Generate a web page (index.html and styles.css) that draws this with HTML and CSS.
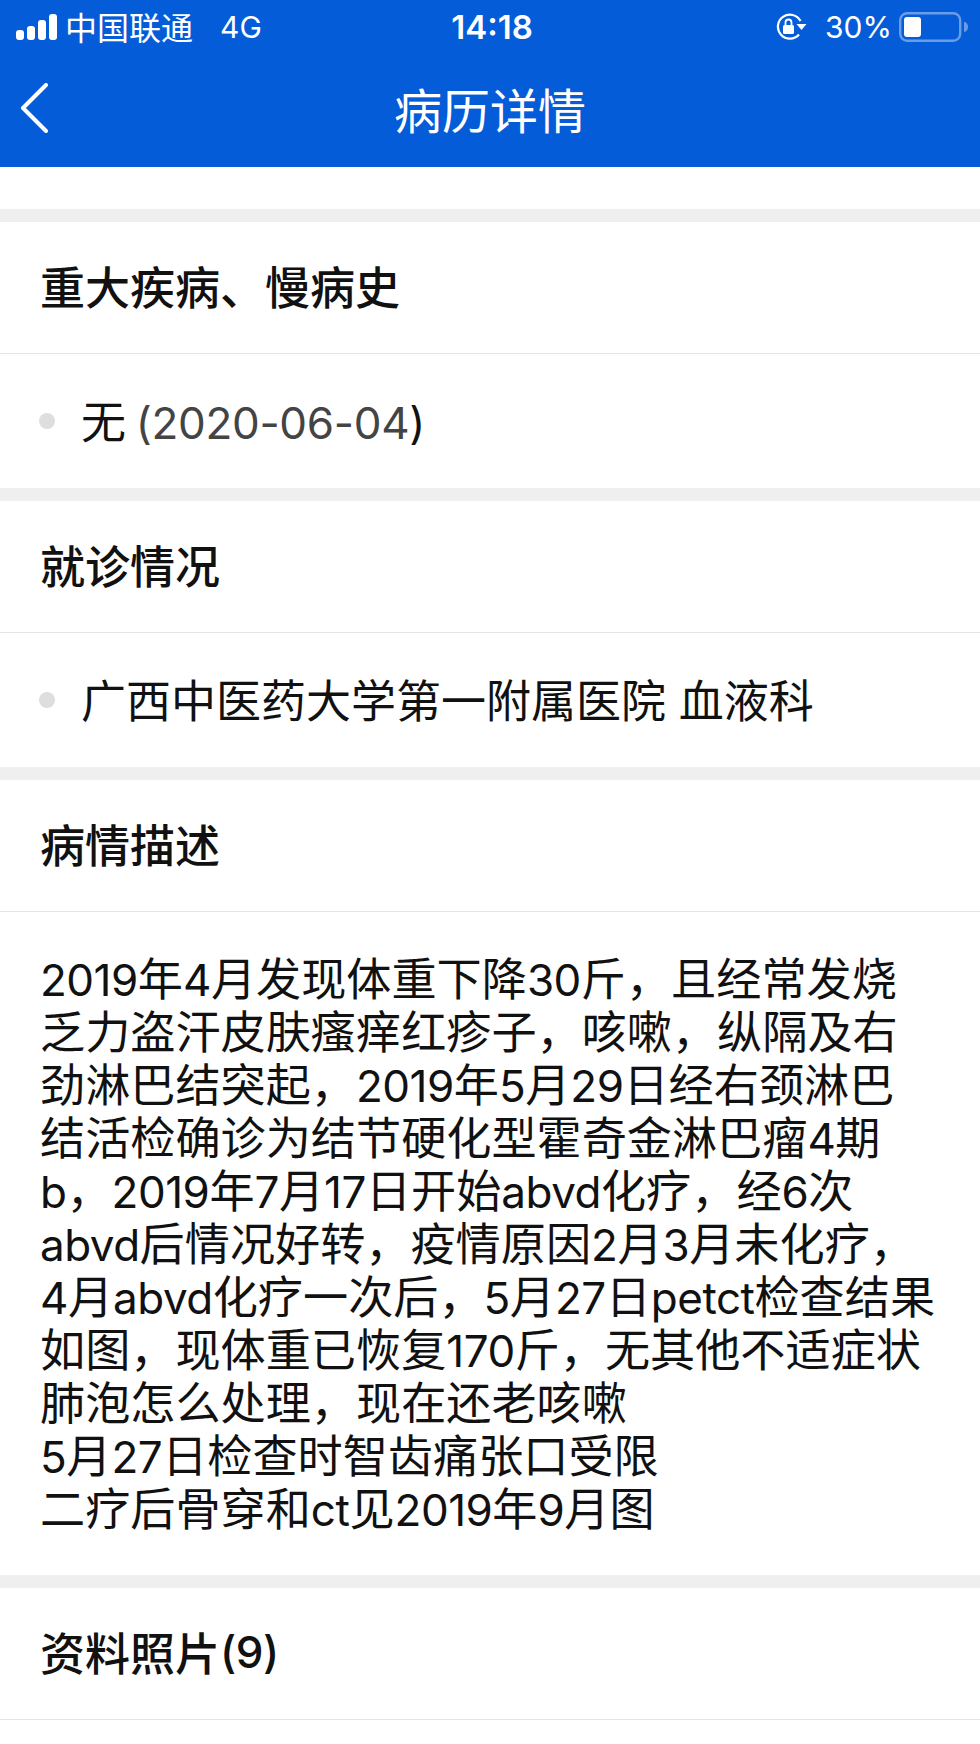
FILE: index.html
```html
<!DOCTYPE html>
<html lang="zh-CN">
<head>
<meta charset="UTF-8">
<title>病历详情</title>
<link rel="stylesheet" href="styles.css">
</head>
<body>

<header class="top">
    <div class="status">
        <div class="status-left">
            <svg class="signal" width="41" height="26" viewBox="0 0 41 26">
                <rect x="0" y="16" width="8" height="10" rx="3" fill="#fff"/>
                <rect x="11" y="12" width="8" height="14" rx="3" fill="#fff"/>
                <rect x="22" y="6" width="8" height="20" rx="3" fill="#fff"/>
                <rect x="33" y="0" width="8" height="26" rx="3" fill="#fff"/>
            </svg>
            <span class="carrier">中国联通</span>
            <span class="net">4G</span>
        </div>
        <div class="clock">14:18</div>
        <div class="status-right">
            <svg class="lock" width="32" height="28" viewBox="0 0 32 28">
                <path d="M24 21.5 A12 12 0 1 1 25.5 8" fill="none" stroke="#fff" stroke-width="2.2"/>
                <path d="M21.5 11 L31.5 11 L26.5 17 Z" fill="#fff"/>
                <rect x="8" y="12" width="11" height="9" rx="1.5" fill="#fff"/>
                <path d="M10.5 12 V9.5 a3 3 0 0 1 6 0 V12" fill="none" stroke="#fff" stroke-width="1.8"/>
            </svg>
            <span class="percent">30%</span>
            <svg class="battery" width="69" height="30" viewBox="0 0 69 30">
                <rect x="1.2" y="1.2" width="60" height="27.6" rx="7" fill="none" stroke="#fff" stroke-opacity=".4" stroke-width="2.4"/>
                <rect x="5" y="5" width="17" height="20" rx="3" fill="#fff"/>
                <path d="M65 10 a4 5 0 0 1 0 10 Z" fill="#fff" fill-opacity=".4"/>
            </svg>
        </div>
    </div>
    <nav class="nav">
        <svg class="back" width="30" height="50" viewBox="0 0 30 50">
            <path d="M26 2 L3 25 L26 48" fill="none" stroke="#fff" stroke-width="4" stroke-linecap="round" stroke-linejoin="round"/>
        </svg>
        <h1 class="nav-title">病历详情</h1>
    </nav>
</header>

<div class="spacer"></div>

<section class="card">
    <h2 class="card-title">重大疾病、慢病史</h2>
    <div class="item"><span class="dot"></span><span class="tight">无 <span class="lat date">(2020-06-04</span><span class="lat">)</span></span></div>
</section>

<section class="card">
    <h2 class="card-title">就诊情况</h2>
    <div class="item"><span class="dot"></span><span>广西中医药大学第一附属医院 血液科</span></div>
</section>

<section class="card">
    <h2 class="card-title">病情描述</h2>
    <p class="desc"><span class="lat">2019</span>年<span class="lat">4</span>月发现体重下降<span class="lat">30</span>斤，且经常发烧<br>乏力盗汗皮肤瘙痒红疹子，咳嗽，纵隔及右<br>劲淋巴结突起，<span class="lat">2019</span>年<span class="lat">5</span>月<span class="lat">29</span>日经右颈淋巴<br>结活检确诊为结节硬化型霍奇金淋巴瘤<span class="lat">4</span>期<br><span class="lat">b</span>，<span class="lat">2019</span>年<span class="lat">7</span>月<span class="lat">17</span>日开始<span class="lat">abvd</span>化疗，经<span class="lat">6</span>次<br><span class="lat">abvd</span>后情况好转，疫情原因<span class="lat">2</span>月<span class="lat">3</span>月未化疗，<br><span class="lat">4</span>月<span class="lat">abvd</span>化疗一次后，<span class="lat">5</span>月<span class="lat">27</span>日<span class="lat">petct</span>检查结果<br>如图，现体重已恢复<span class="lat">170</span>斤，无其他不适症状<br>肺泡怎么处理，现在还老咳嗽<br><span class="lat">5</span>月<span class="lat">27</span>日检查时智齿痛张口受限<br>二疗后骨穿和<span class="lat">ct</span>见<span class="lat">2019</span>年<span class="lat">9</span>月图</p>
</section>

<section class="card">
    <h2 class="card-title">资料照片<span class="lat">(9)</span></h2>
</section>

</body>
</html>
```

FILE: styles.css
```css
* {
    box-sizing: border-box;
}
html, body {
    margin: 0;
    padding: 0;
}
body {
    background-color: #fff;
    color: #111;
    font-family: Inter, "Noto Sans CJK SC", sans-serif;
    overflow: hidden;
}

.top {
    background-color: #055cd8;
    color: #fff;
    height: 167px;
}
.status {
    height: 54px;
    padding: 0 12px 0 16px;
    display: grid;
    grid-template-columns: 1fr auto 1fr;
    align-items: center;
}
.status-left, .status-right {
    display: flex;
    align-items: center;
}
.status-right {
    justify-content: flex-end;
}
.signal {
    margin-right: 8px;
}
.carrier {
    font-size: 32px;
    margin-bottom: 3px;
}
.net {
    font-size: 30px;
    margin-left: 27px;
}
.clock {
    font-size: 33px;
    font-weight: 600;
}
.percent {
    font-size: 30px;
    margin: 0 7px 0 18px;
}

.nav {
    height: 113px;
    padding: 0 20px 6px;
    display: flex;
    align-items: center;
    position: relative;
}
.nav-title {
    position: absolute;
    left: 0;
    right: 0;
    margin: 0;
    text-align: center;
    font-size: 48px;
    font-weight: 400;
}

.spacer {
    height: 42px;
}
.card {
    border-top: 13px solid #efefef;
}
.card-title {
    margin: 0;
    height: 132px;
    padding: 0 40px 4px;
    display: flex;
    align-items: center;
    font-size: 45px;
    font-weight: 500;
    border-bottom: 1px solid #e4e4e4;
}
.item {
    height: 134px;
    padding: 0 39px 4px;
    display: flex;
    align-items: center;
    gap: 26px;
    font-size: 45px;
}
.dot {
    width: 16px;
    height: 16px;
    margin-top: 4px;
    border-radius: 50%;
    background-color: #dedede;
}
.tight {
    word-spacing: -3px;
}
.lat {
    font-size: 44px;
    letter-spacing: -.5px;
    line-height: 1;
}
.date {
    color: #444;
    letter-spacing: -.3px;
}
.desc {
    margin: 0;
    height: 663px;
    padding: 41px 40px 0;
    font-size: 45.15px;
    line-height: 53px;
    white-space: nowrap;
}
```
